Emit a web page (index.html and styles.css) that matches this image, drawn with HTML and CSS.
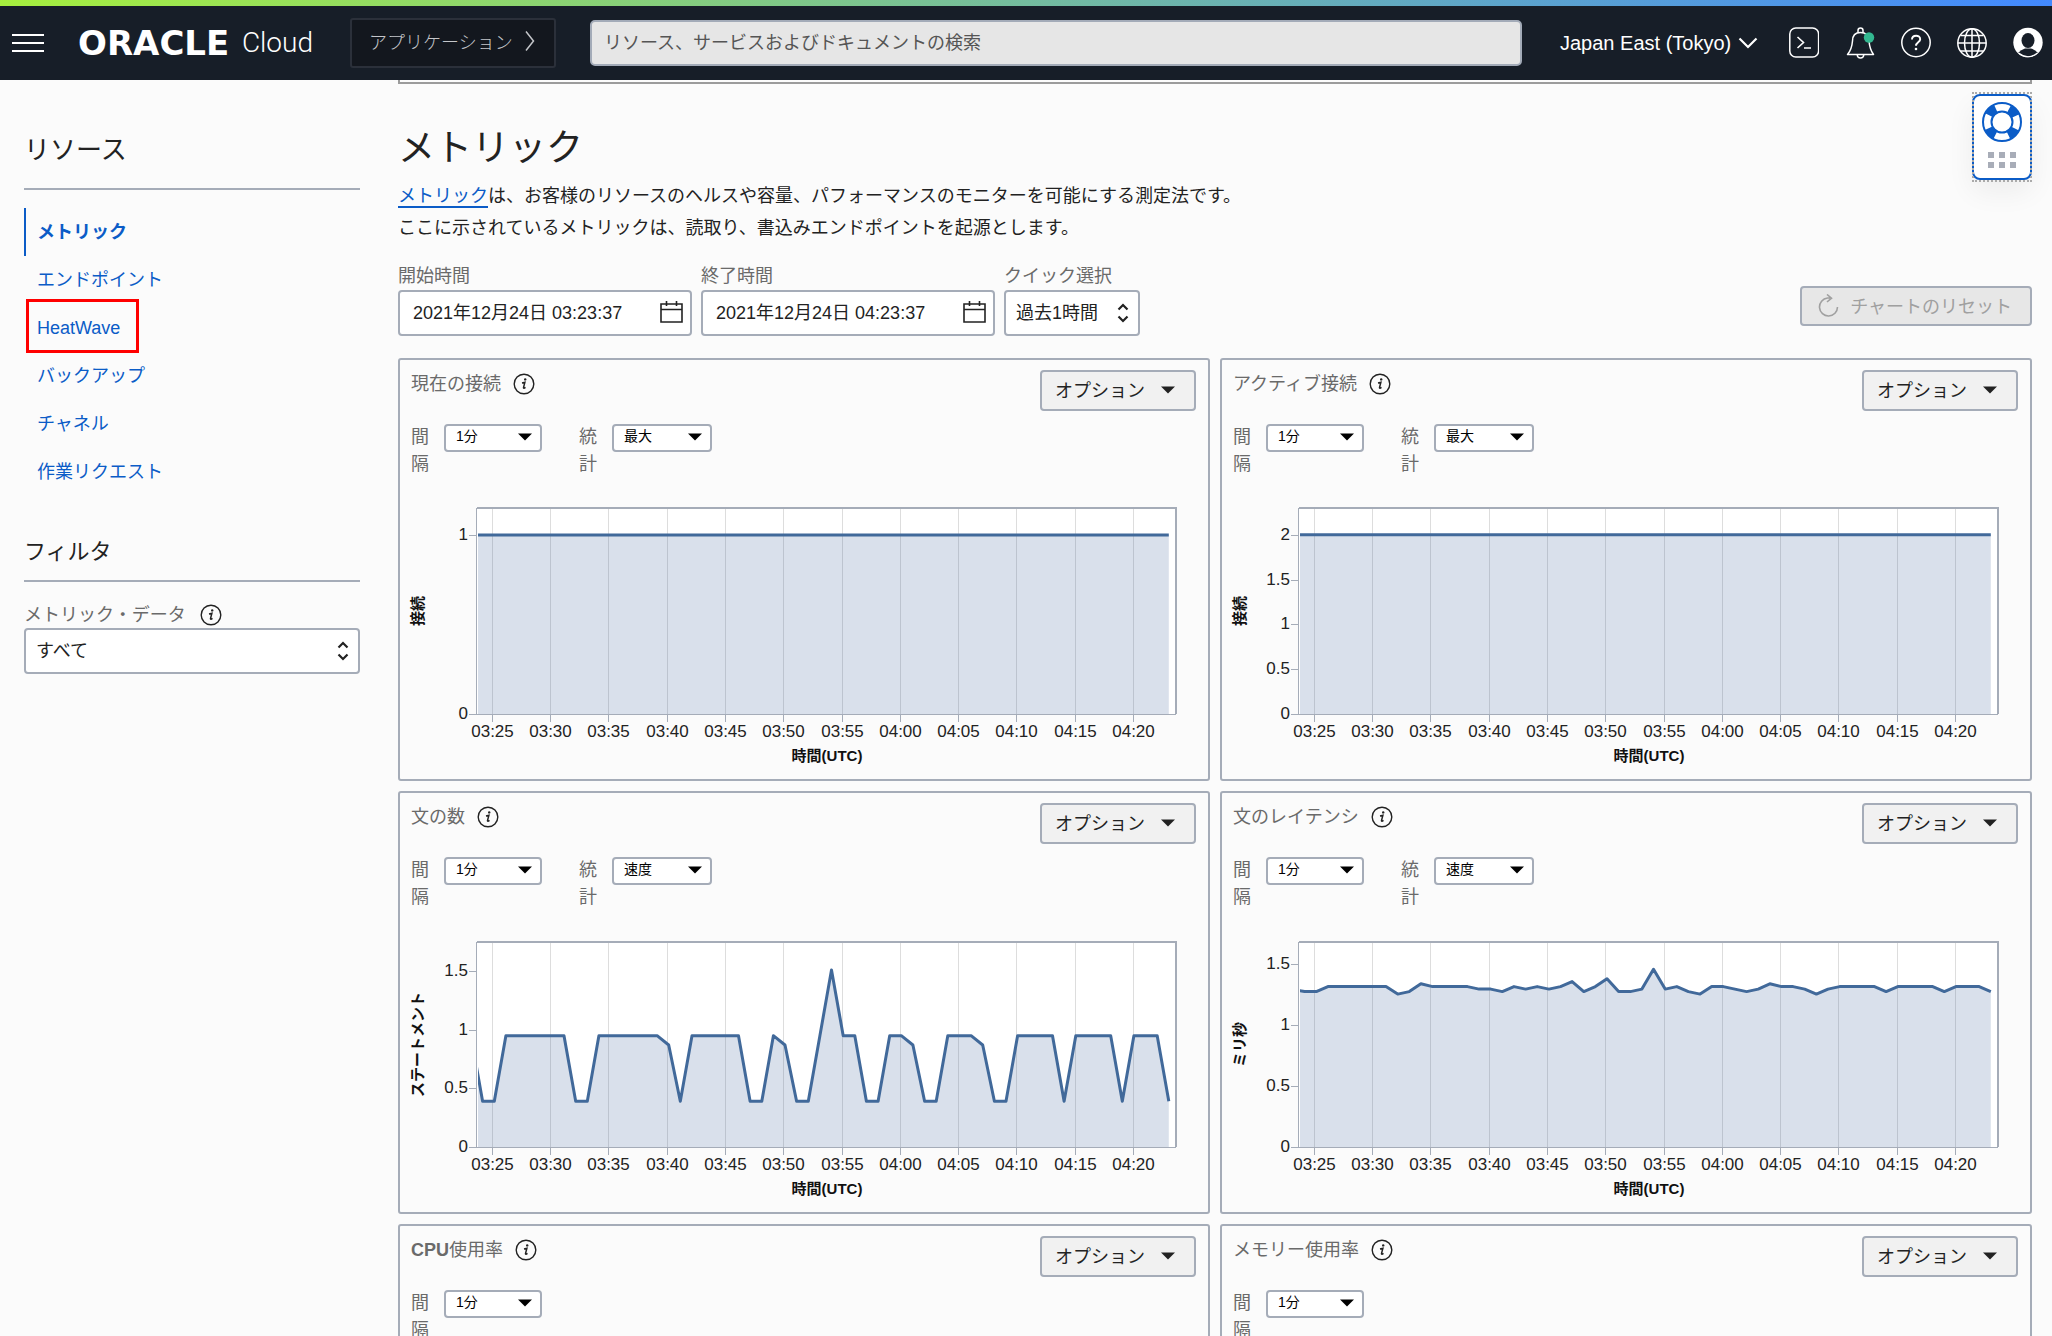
FILE: index.html
```html
<!DOCTYPE html>
<html lang="ja">
<head>
<meta charset="utf-8">
<title>メトリック - Oracle Cloud</title>
<link rel="stylesheet" href="styles.css">
</head>
<body>
<svg class="defs" aria-hidden="true">
  <symbol id="info" viewBox="0 0 22 22">
    <circle cx="11" cy="11" r="9.8" fill="none" stroke="#222" stroke-width="1.4"/>
    <circle cx="12.200" cy="6.400" r="1.200" fill="#222"/>
    <path d="M9 9.900 L11.900 9.300 L10.500 14.600 Q10.400 15.900 12.500 14.400" fill="none" stroke="#222" stroke-width="1.500"/>
  </symbol>
  <symbol id="updown" viewBox="0 0 12 20">
    <path d="M1.5 6.5 L6 2 L10.500 6.500 M1.500 13.500 L6 18 L10.500 13.500" fill="none" stroke="#222" stroke-width="2.200"/>
  </symbol>
  <symbol id="caret" viewBox="0 0 14 8"><path d="M0 0.500 H14 L7 7.500 Z" fill="currentColor"/></symbol>
  <symbol id="calendar" viewBox="0 0 23 22">
    <path d="M1 3 H22 V21 H1 Z M1 8.500 H22 M6.500 0 V5 M16.500 0 V5" fill="none" stroke="#222" stroke-width="1.600"/>
  </symbol>
</svg>
<div class="app">
  <header class="topbar">
    <button class="icon-btn menu" aria-label="メニュー"><svg width="32" height="20" viewBox="0 0 32 20"><path d="M0 2 H32 M0 10 H32 M0 18 H32" stroke="#fff" stroke-width="2"/></svg></button>
    <a class="logo" href="#"><b>ORACLE</b><span>Cloud</span></a>
    <button class="apps">アプリケーション<svg width="10" height="22" viewBox="0 0 10 22"><path d="M1 1.500 L8.500 11 L1 20.500" fill="none" stroke="#c4c6ca" stroke-width="1.500"/></svg></button>
    <input class="search" type="search" placeholder="リソース、サービスおよびドキュメントの検索" aria-label="検索">
    <button class="region">Japan East (Tokyo)<svg width="20" height="12" viewBox="0 0 20 12"><path d="M1.500 1.500 L10 10 L18.500 1.500" fill="none" stroke="#fff" stroke-width="2.200"/></svg></button>
    <div class="tools">
      <button class="icon-btn" aria-label="Cloud Shell"><svg viewBox="0 0 30 32"><rect x="0.800" y="1" width="28.800" height="29" rx="6" fill="none" stroke="#fff" stroke-width="1.500"/><path d="M8.500 10 L14.500 15.500 L8.500 21 M15 21 H22" fill="none" stroke="#fff" stroke-width="1.600"/></svg></button>
      <button class="icon-btn" aria-label="お知らせ"><svg viewBox="0 0 30 32"><path d="M2.500 27.500 H28.500 C25.500 23.500 24.500 20 24 14 C23.600 8 20.500 5.500 15.500 5.500 C10.500 5.500 7.500 8 7.500 14 C7 20 6 23.500 2.500 27.500 Z M13 5.500 V3.500 Q13 1 15.500 1 Q18 1 18 3.500 V5.500 M12.200 28 Q12.500 31 15.500 31 Q18.500 31 18.800 28" fill="none" stroke="#fff" stroke-width="1.500" stroke-linejoin="round"/><circle cx="24" cy="10.500" r="5.200" fill="#33b890"/></svg></button>
      <button class="icon-btn" aria-label="ヘルプ"><svg viewBox="0 0 30 32"><circle cx="15" cy="15.500" r="14.200" fill="none" stroke="#fff" stroke-width="1.500"/><path d="M11 12.500 C11 7.500 19.200 7.500 19.200 12.200 C19.200 15.400 15 15.200 15 18.800" fill="none" stroke="#fff" stroke-width="1.900"/><circle cx="15" cy="22" r="1.300" fill="#fff"/></svg></button>
      <button class="icon-btn" aria-label="言語"><svg viewBox="0 0 30 32"><g fill="none" stroke="#fff" stroke-width="1.500"><circle cx="15" cy="16" r="14.200"/><ellipse cx="15" cy="16" rx="7.500" ry="14.200"/><path d="M1 16 H29 M15 2 V30 M3.500 8.500 H26.500 M3.500 24 H26.500"/></g></svg></button>
      <button class="icon-btn" aria-label="プロファイル"><svg viewBox="0 0 30 32"><circle cx="15" cy="15.500" r="14.700" fill="#fff"/><ellipse cx="15" cy="13.500" rx="6.500" ry="7.500" fill="#171e28"/><path d="M5 26 Q8 22.500 12 21.500 H18 Q22 22.500 25 26 Q15 33 5 26 Z" fill="#171e28"/><path d="M5.500 26 Q15 33.500 24.500 26" fill="none" stroke="#fff" stroke-width="1.200"/></svg></button>
    </div>
  </header>

  <div class="content">
    <aside class="sidebar">
      <h2 class="side-title">リソース</h2>
      <nav class="side-nav">
        <a class="current" href="#">メトリック</a>
        <a href="#">エンドポイント</a>
        <a class="marked" href="#">HeatWave</a>
        <a href="#">バックアップ</a>
        <a href="#">チャネル</a>
        <a href="#">作業リクエスト</a>
      </nav>
      <h3 class="side-subtitle">フィルタ</h3>
      <div class="filter-label"><label for="metric-data">メトリック・データ</label><svg class="info"><use href="#info"/></svg></div>
      <div class="control">
        <select id="metric-data" class="field"><option>すべて</option></select>
        <svg class="updown"><use href="#updown"/></svg>
      </div>
    </aside>

    <main class="main">
      <div class="previous-panel"></div>
      <h1 class="title">メトリック</h1>
      <p class="intro"><a href="#">メトリック</a>は、お客様のリソースのヘルスや容量、パフォーマンスのモニターを可能にする測定法です。<br>ここに示されているメトリックは、読取り、書込みエンドポイントを起源とします。</p>
      <div class="toolbar">
        <div class="date">
          <label for="start">開始時間</label>
          <div class="control"><input id="start" class="field" type="text" value="2021年12月24日 03:23:37"><svg class="calendar"><use href="#calendar"/></svg></div>
        </div>
        <div class="date">
          <label for="end">終了時間</label>
          <div class="control"><input id="end" class="field" type="text" value="2021年12月24日 04:23:37"><svg class="calendar"><use href="#calendar"/></svg></div>
        </div>
        <div class="quick">
          <label for="quick">クイック選択</label>
          <div class="control"><select id="quick" class="field"><option>過去1時間</option></select><svg class="updown"><use href="#updown"/></svg></div>
        </div>
        <button class="reset" disabled><svg width="24" height="24" viewBox="0 0 24 24"><path d="M14 4 H11.500 A9 9 0 1 0 21.500 13 M11 0.500 L15.500 4.200 L11 8" fill="none" stroke="#a0a0a0" stroke-width="1.600"/></svg><span>チャートのリセット</span></button>
      </div>

      <div class="cards">
        <section class="card">
          <div class="card-head"><h4>現在の接続</h4><svg class="info"><use href="#info"/></svg><button class="options">オプション<svg class="caret"><use href="#caret"/></svg></button></div>
          <div class="card-fields">
            <label for="i1">間隔</label><div class="control mini"><select id="i1"><option>1分</option></select><svg class="caret"><use href="#caret"/></svg></div>
            <label for="s1">統計</label><div class="control mini"><select id="s1"><option>最大</option></select><svg class="caret"><use href="#caret"/></svg></div>
          </div>
          <svg class="chart" viewBox="0 0 808 281" data-series="connections" role="img" aria-label="現在の接続"></svg>
        </section>
        <section class="card">
          <div class="card-head"><h4>アクティブ接続</h4><svg class="info"><use href="#info"/></svg><button class="options">オプション<svg class="caret"><use href="#caret"/></svg></button></div>
          <div class="card-fields">
            <label for="i2">間隔</label><div class="control mini"><select id="i2"><option>1分</option></select><svg class="caret"><use href="#caret"/></svg></div>
            <label for="s2">統計</label><div class="control mini"><select id="s2"><option>最大</option></select><svg class="caret"><use href="#caret"/></svg></div>
          </div>
          <svg class="chart" viewBox="0 0 808 281" data-series="active" role="img" aria-label="アクティブ接続"></svg>
        </section>
        <section class="card">
          <div class="card-head"><h4>文の数</h4><svg class="info"><use href="#info"/></svg><button class="options">オプション<svg class="caret"><use href="#caret"/></svg></button></div>
          <div class="card-fields">
            <label for="i3">間隔</label><div class="control mini"><select id="i3"><option>1分</option></select><svg class="caret"><use href="#caret"/></svg></div>
            <label for="s3">統計</label><div class="control mini"><select id="s3"><option>速度</option></select><svg class="caret"><use href="#caret"/></svg></div>
          </div>
          <svg class="chart" viewBox="0 0 808 281" data-series="statements" role="img" aria-label="文の数"></svg>
        </section>
        <section class="card">
          <div class="card-head"><h4>文のレイテンシ</h4><svg class="info"><use href="#info"/></svg><button class="options">オプション<svg class="caret"><use href="#caret"/></svg></button></div>
          <div class="card-fields">
            <label for="i4">間隔</label><div class="control mini"><select id="i4"><option>1分</option></select><svg class="caret"><use href="#caret"/></svg></div>
            <label for="s4">統計</label><div class="control mini"><select id="s4"><option>速度</option></select><svg class="caret"><use href="#caret"/></svg></div>
          </div>
          <svg class="chart" viewBox="0 0 808 281" data-series="latency" role="img" aria-label="文のレイテンシ"></svg>
        </section>
        <section class="card">
          <div class="card-head"><h4><b>CPU</b>使用率</h4><svg class="info"><use href="#info"/></svg><button class="options">オプション<svg class="caret"><use href="#caret"/></svg></button></div>
          <div class="card-fields">
            <label for="i5">間隔</label><div class="control mini"><select id="i5"><option>1分</option></select><svg class="caret"><use href="#caret"/></svg></div>
          </div>
        </section>
        <section class="card">
          <div class="card-head"><h4>メモリー使用率</h4><svg class="info"><use href="#info"/></svg><button class="options">オプション<svg class="caret"><use href="#caret"/></svg></button></div>
          <div class="card-fields">
            <label for="i6">間隔</label><div class="control mini"><select id="i6"><option>1分</option></select><svg class="caret"><use href="#caret"/></svg></div>
          </div>
        </section>
      </div>
    </main>

    <div class="support">
      <button aria-label="サポート">
        <svg width="40" height="40" viewBox="0 0 40 40"><circle cx="20" cy="20" r="14.500" fill="none" stroke="#0b5cc7" stroke-width="9" stroke-dasharray="9.400 13.377" stroke-dashoffset="-6.700"/><circle cx="20" cy="20" r="19" fill="none" stroke="#0b5cc7" stroke-width="2"/><circle cx="20" cy="20" r="10.500" fill="none" stroke="#0b5cc7" stroke-width="2"/></svg>
        <svg width="28" height="16" viewBox="0 0 28 16"><path d="M0 0h6v6h-6z M11 0h6v6h-6z M22 0h6v6h-6z M0 10h6v6h-6z M11 10h6v6h-6z M22 10h6v6h-6z" fill="#a8adb8"/></svg>
      </button>
    </div>
  </div>
</div>
<script src="charts.js"></script>
</body>
</html>
```
FILE: styles.css
```css
* { box-sizing: border-box; }

body {
  margin: 0;
  background: #fbfbfb;
  color: #222;
  font-family: "Liberation Sans", "Noto Sans CJK JP", sans-serif;
  font-size: 18px;
}

button, input, select { font: inherit; color: inherit; margin: 0; }
h1, h2, h3, h4, p { margin: 0; font-weight: 400; }
a { color: #0b5cc7; text-decoration: none; }
svg { display: block; flex: none; }
.defs { width: 0; height: 0; position: absolute; }

.app { display: flex; flex-direction: column; height: 100vh; overflow: hidden; }

/* Top bar */
.topbar {
  flex: none;
  display: flex;
  align-items: center;
  height: 80px;
  padding: 6px 9px 0 12px;
  background: linear-gradient(90deg, #a6ef3e, #4289ff) top / 100% 6px no-repeat #171e28;
  color: #fff;
}
.icon-btn { padding: 0; border: 0; background: none; width: 30px; }
.icon-btn svg { width: 30px; height: 32px; }
.menu { width: 32px; margin-right: 34px; }
.menu svg { width: 32px; height: 20px; }
.logo { display: flex; align-items: center; justify-content: space-between; width: 235px; margin-right: 37px; color: #fff; }
.logo b { font: bold 34px/32px "DejaVu Sans", sans-serif; }
.logo span { font: 300 28px/32px Roboto, "Liberation Sans", sans-serif; }
.apps {
  display: flex;
  align-items: center;
  justify-content: space-between;
  width: 206px;
  height: 50px;
  margin-right: 34px;
  padding: 0 19px 4px 17px;
  border: 2px solid #2b303a;
  border-radius: 3px;
  background: #13171e;
  color: #c4c6ca;
  font-weight: 300;
}
.search {
  flex: 1;
  min-width: 0;
  height: 46px;
  margin-right: 38px;
  padding: 0 12px;
  border: 2px solid #a3abb8;
  border-radius: 5px;
  background: #e6e6e6;
  outline: 0;
}
.search::placeholder { color: #555; opacity: 1; }
.region {
  display: flex;
  align-items: center;
  justify-content: space-between;
  width: 198px;
  margin-right: 31px;
  padding: 0;
  border: 0;
  background: none;
  font-size: 20px;
  white-space: nowrap;
}
.tools { display: flex; gap: 26px; }

/* Layout */
.content {
  position: relative;
  flex: 1;
  min-height: 0;
  overflow: hidden;
  display: grid;
  grid-template-columns: 336px minmax(0, 1fr);
  column-gap: 38px;
  padding: 0 20px 0 24px;
}

/* Sidebar */
.sidebar { padding-top: 54px; }
.side-title { padding-bottom: 22px; border-bottom: 2px solid #a5acb8; font-size: 26px; line-height: 32px; }
.side-nav { display: flex; flex-direction: column; align-items: flex-start; margin: 18px 0 40px; }
.side-nav a { padding: 0 14px 0 11px; border-left: 2px solid transparent; line-height: 48px; }
.side-nav .current { border-color: #0b5cc7; font-weight: bold; }
.side-nav .marked { margin: -5px 0 -1px 2px; padding: 4px 16px 0 8px; border: 3px solid #f00; line-height: 44px; }
.side-subtitle { padding-bottom: 12px; border-bottom: 2px solid #a5acb8; font-size: 22px; line-height: 32px; }
.filter-label { display: flex; align-items: center; gap: 14px; margin: 21px 0 1px; color: #6a6a6a; line-height: 24px; }
.info { width: 22px; height: 22px; }

/* Form controls */
.control { position: relative; }
.control svg { position: absolute; pointer-events: none; }
.field {
  appearance: none;
  display: block;
  width: 100%;
  height: 46px;
  padding: 0 10px;
  border: 2px solid #a5acb8;
  border-radius: 4px;
  background: #fff;
}
.updown { width: 12px; height: 20px; right: 11px; top: 13px; }
.calendar { width: 23px; height: 22px; right: 9px; top: 11px; }
.date .field { padding: 0 13px 4px; }

/* Main column */
.previous-panel { height: 4px; border: 2px solid #9b9b9b; border-top: 0; }
.title { margin-top: 43px; font-size: 37px; line-height: 44px; }
.intro { margin-top: 9px; line-height: 32px; }
.intro a { border-bottom: 2px solid #0b5cc7; }
.toolbar { display: flex; align-items: flex-end; gap: 9px; margin: 19px 0 22px; }
.toolbar label { display: block; margin-bottom: 1px; line-height: 26px; color: #6a6a6a; }
.date { width: 294px; }
.quick { width: 136px; }
.reset {
  display: flex;
  align-items: center;
  justify-content: space-between;
  width: 232px;
  height: 40px;
  margin: 0 0 10px auto;
  padding: 0 18px 0 14px;
  border: 2px solid #a5acb8;
  border-radius: 4px;
  background: #e7e7e7;
  color: #a0a0a0;
}
.reset span { padding-bottom: 3px; }

/* Metric cards */
.cards { display: grid; grid-template-columns: repeat(2, minmax(0, 1fr)); gap: 10px; }
.card { display: flex; flex-direction: column; min-height: 423px; border: 2px solid #a5acb8; border-radius: 3px; }
.card-head { display: flex; align-items: flex-start; gap: 12px; height: 64px; padding: 10px 12px 0 11px; }
.card-head h4 { font-size: 18px; line-height: 28px; color: #6a6a6a; }
.card-head .info { margin-top: 3px; }
.options {
  display: flex;
  align-items: center;
  justify-content: space-between;
  width: 156px;
  height: 41px;
  margin-left: auto;
  padding: 0 19px 4px 13px;
  border: 2px solid #a5acb8;
  border-radius: 4px;
  background: #f1f1f1;
}
.caret { width: 14px; height: 8px; }
.options .caret { margin-top: 3px; }
.card-fields { display: flex; align-items: flex-start; height: 74px; padding-left: 11px; color: #000; }
.card-fields label { width: 18px; margin-right: 15px; line-height: 27px; color: #6a6a6a; word-break: break-all; }
.mini { width: 98px; margin-right: 37px; }
.mini:nth-child(4) { width: 100px; }
.mini select {
  appearance: none;
  display: block;
  width: 100%;
  height: 28px;
  padding: 0 10px 4px;
  border: 2px solid #a5acb8;
  border-radius: 4px;
  background: #fff;
  font-size: 14px;
}
.mini .caret { right: 10px; top: 9px; }

/* Charts */
.chart { width: 100%; height: auto; margin-top: auto; }
.plot-bg { fill: #fff; }
.grid-line { stroke: #ddd; stroke-width: 1; }
.frame { fill: none; stroke: #a5acb8; stroke-width: 2; }
.tick { stroke: #a5acb8; stroke-width: 1; }
.area { fill: #41639a; fill-opacity: .2; }
.line { fill: none; stroke: #41699a; stroke-width: 3; stroke-linejoin: round; }
.tick-label { font-size: 17px; fill: #222; }
.axis-title { font-size: 15px; font-weight: bold; fill: #111; text-anchor: middle; }

/* Floating support widget */
.support { position: absolute; right: 20px; top: 12px; width: 60px; height: 90px; outline: 2px dotted #aaa; outline-offset: -2px; padding: 2px 0; }
.support button {
  display: flex;
  flex-direction: column;
  align-items: center;
  gap: 10px;
  width: 100%;
  height: 86px;
  padding: 6px 0 0;
  border: 2px solid #0b5cc7;
  border-radius: 8px;
  background: #fff;
  box-shadow: 0 12px 28px rgba(0, 0, 0, .06);
}
```
FILE: charts.js
```javascript
// One sample per minute, from 03:23 to 04:23.
const flat = (value) => Array(61).fill(value);
const runs = (pairs) => pairs.flatMap(([value, count]) => Array(count).fill(value));

const series = {
  connections: { unit: '接続', top: 10, labels: [0, 1], perUnit: 179, data: flat(1) },
  active: { unit: '接続', top: 10, labels: [0, 0.5, 1, 1.5, 2], perUnit: 89.6, data: flat(2) },
  statements: {
    unit: 'ステートメント', top: 11, labels: [0, 0.5, 1, 1.5], perUnit: 117.2,
    data: runs([[.95, 1], [.39, 2], [.95, 6], [.39, 2], [.95, 6], [.87, 1], [.39, 1], [.95, 5], [.39, 2],
      [.95, 1], [.87, 1], [.39, 2], [.95, 1], [1.51, 1], [.95, 2], [.39, 2], [.95, 2], [.87, 1], [.39, 2],
      [.95, 3], [.87, 1], [.39, 2], [.95, 4], [.39, 1], [.95, 4], [.39, 1], [.95, 3], [.39, 1]])
  },
  latency: {
    unit: 'ミリ秒', top: 11, labels: [0, 0.5, 1, 1.5], perUnit: 122.1,
    data: runs([[1.29, 1], [1.273, 2], [1.314, 6], [1.252, 1], [1.273, 1], [1.337, 1], [1.314, 4], [1.293, 2],
      [1.273, 1], [1.314, 1], [1.293, 1], [1.314, 1], [1.293, 1], [1.314, 1], [1.355, 1], [1.273, 1],
      [1.314, 1], [1.378, 1], [1.273, 2], [1.293, 1], [1.456, 1], [1.293, 1], [1.314, 1], [1.273, 1],
      [1.252, 1], [1.314, 2], [1.293, 1], [1.273, 1], [1.293, 1], [1.337, 1], [1.314, 2], [1.293, 1],
      [1.252, 1], [1.293, 1], [1.314, 4], [1.273, 1], [1.314, 4], [1.273, 1], [1.314, 3], [1.273, 1]])
  }
};

const left = 77, right = 776, bottom = 216;

document.querySelectorAll('.chart').forEach((svg) => {
  const name = svg.dataset.series;
  const s = series[name];
  const y = (v) => bottom - v * s.perUnit;
  const x = (i) => 71 + i * 11.63;
  const points = s.data.map((v, i) => `${x(i).toFixed(1)},${y(v).toFixed(1)}`).join(' ');
  let out = `<clipPath id="clip-${name}"><rect x="${left + 1}" y="0" width="${right - left}" height="${bottom + 1}"/></clipPath>`;
  out += `<rect class="plot-bg" x="${left}" y="${s.top}" width="${right - left}" height="${bottom - s.top}"/>`;
  let ticks = '';
  for (let k = 0; k < 12; k++) {
    const tx = Math.floor(92.3 + k * 58.3) + 0.5;
    const minutes = 205 + k * 5;
    const label = `0${Math.floor(minutes / 60)}:${String(minutes % 60).padStart(2, '0')}`;
    out += `<line class="grid-line" x1="${tx}" x2="${tx}" y1="${s.top}" y2="${bottom}"/>`;
    ticks += `<line class="tick" x1="${tx}" x2="${tx}" y1="${bottom}" y2="${bottom + 8}"/>`;
    ticks += `<text class="tick-label" text-anchor="middle" x="${tx}" y="239">${label}</text>`;
  }
  s.labels.forEach((v) => {
    const ty = Math.round(y(v)) + 0.5;
    ticks += `<line class="tick" x1="${left - 8}" x2="${left}" y1="${ty}" y2="${ty}"/>`;
    ticks += `<text class="tick-label" text-anchor="end" x="${left - 9}" y="${ty + 4.5}">${v}</text>`;
  });
  out += `<path class="frame" d="M${left} ${s.top} H${right} V${bottom}"/>`;
  out += `<path class="tick" fill="none" d="M${left - 0.5} ${s.top} V${bottom + 0.5} H${right}"/>`;
  out += `<g clip-path="url(#clip-${name})"><polygon class="area" points="${x(0)},${bottom} ${points} ${x(60)},${bottom}"/><polyline class="line" points="${points}"/></g>`;
  out += ticks;
  out += `<text class="axis-title" x="427" y="263">時間(UTC)</text>`;
  out += `<text class="axis-title" transform="translate(23 ${(s.top + bottom) / 2}) rotate(-90)">${s.unit}</text>`;
  svg.innerHTML = out;
});
```
